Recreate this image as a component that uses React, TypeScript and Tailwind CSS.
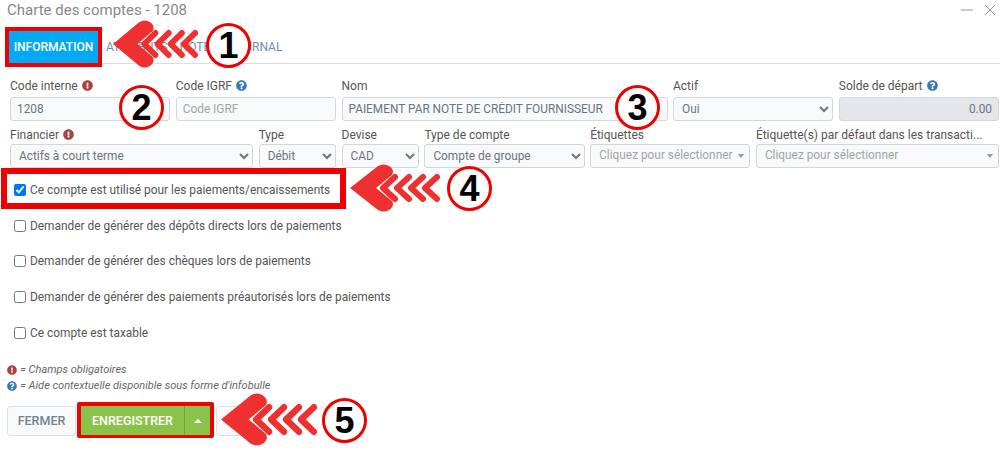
import { FaExclamationCircle, FaQuestionCircle } from "react-icons/fa";

function Required() {
  return <FaExclamationCircle className="inline-block ml-1 text-[#a94442] text-[11px] align-[-1px]" />;
}

function Help() {
  return <FaQuestionCircle className="inline-block ml-1 text-[#337ab7] text-[11px] align-[-1px]" />;
}

function Field({ label, span, tall, children }: { label: React.ReactNode; span: string; tall?: boolean; children: React.ReactNode }) {
  return (
    <div className={span}>
      <div className={(tall ? "h-[19px]" : "h-[17px]") + " text-[12px] leading-[17px] text-[#555] whitespace-nowrap overflow-hidden"}>{label}</div>
      {children}
    </div>
  );
}

const boxClass =
  "block w-full h-[24px] text-[11.85px] placeholder-[#a0a6ab] border border-[#d3d7da] rounded-[3px] outline-none";
const inputClass = boxClass + " px-[6px] text-[#6c757d] bg-[#f8f9fa]";

function Select({ value }: { value: string }) {
  return (
    <select defaultValue={value} className={boxClass + " px-[4px] text-[#6c757d] bg-[#f8f9fa]"}>
      <option>{value}</option>
    </select>
  );
}

function TagPicker() {
  return (
    <div className={boxClass + " flex items-center justify-between pl-[8px] pr-[5px] text-[#a0a6ab] bg-[#f8f9fa]"}>
      <span className="whitespace-nowrap">Cliquez pour sélectionner</span>
      <span className="border-x-[3px] border-x-transparent border-t-[4px] border-t-[#999]" />
    </div>
  );
}

function CheckRow({ label, checked, className }: { label: string; checked?: boolean; className: string }) {
  return (
    <label className={"flex items-center text-[11.9px] leading-[16px] text-[#555] ml-[14px] " + className}>
      <input type="checkbox" defaultChecked={checked} className="w-[12px] h-[12px] mr-[4px] accent-[#0075ff]" />
      {label}
    </label>
  );
}

// Red arrow used by the numbered callouts, tip on the left
function Arrow({ className }: { className: string }) {
  return (
    <svg viewBox="0 0 90 48" preserveAspectRatio="none" className={"absolute " + className}>
      <path
        d="M0 24 L28 2 Q34 -1 39 2 Q45 6 42 11 L26 24 L42 37 Q45 42 39 46 Q34 49 28 46 Z"
        fill="#ee3030"
      />
      <g fill="none" stroke="#ee3030" strokeWidth="6" strokeLinecap="round" strokeLinejoin="round">
        <path d="M45 13 L33 24 L45 35" />
        <path d="M59 13 L47 24 L59 35" />
        <path d="M73 13 L61 24 L73 35" />
        <path d="M87 13 L75 24 L87 35" />
      </g>
    </svg>
  );
}

function Badge({ n, className }: { n: number; className: string }) {
  return (
    <div
      className={
        "absolute w-[45px] h-[45px] rounded-full bg-white border-[3px] border-[#f00000] flex items-center justify-center text-black text-[36px] font-bold font-['Liberation_Sans',sans-serif] " +
        className
      }
    >
      {n}
    </div>
  );
}

export default function App() {
  return (
    <div className="relative w-[1000px] h-[451px] overflow-hidden bg-white font-['Roboto',sans-serif]">
      {/* Header */}
      <div className="flex items-center justify-between h-[20px] pl-[7px] pr-[4px]">
        <h1 className="text-[15px] leading-[20px] text-[#888]">Charte des comptes - 1208</h1>
        <div className="flex items-center gap-[11px]">
          <svg width="12" height="12" viewBox="0 0 12 12" stroke="#999" strokeWidth="1">
            <path d="M0 6h12" />
          </svg>
          <svg width="12" height="12" viewBox="0 0 12 12" stroke="#999" strokeWidth="1">
            <path d="M1 1l10 10M11 1L1 11" />
          </svg>
        </div>
      </div>

      {/* Tabs */}
      <div className="flex items-stretch h-[33px] mt-[11px] ml-[9px] border-b border-[#ddd] text-[12px] text-[#6f8fa6]">
        <div className="flex items-center justify-center w-[89px] bg-[#03a9f4] text-white font-medium">INFORMATION</div>
        <div className="flex items-center gap-[12px] pl-[8px]">
          <span>ATTRIBUTS</span>
          <span>NOTES</span>
          <span>JOURNAL</span>
        </div>
      </div>

      {/* Form */}
      <div className="grid grid-cols-12 gap-x-[5.5px] gap-y-[6px] mt-[14px] pl-[10px] pr-[1px]">
        <Field tall span="col-span-2" label={<>Code interne<Required /></>}>
          <input className={inputClass} defaultValue="1208" />
        </Field>
        <Field tall span="col-span-2" label={<>Code IGRF<Help /></>}>
          <input className={inputClass} placeholder="Code IGRF" />
        </Field>
        <Field tall span="col-span-4" label="Nom">
          <input className={inputClass} defaultValue="PAIEMENT PAR NOTE DE CRÉDIT FOURNISSEUR" />
        </Field>
        <Field tall span="col-span-2" label="Actif">
          <Select value="Oui" />
        </Field>
        <Field tall span="col-span-2" label={<>Solde de départ<Help /></>}>
          <input className={boxClass + " px-[6px] text-[#6c757d] bg-[#e4e6e9] border-[#c9ccd0] text-right"} defaultValue="0.00" disabled />
        </Field>

        <Field span="col-span-3" label={<>Financier<Required /></>}>
          <Select value="Actifs à court terme" />
        </Field>
        <Field span="col-span-1" label="Type">
          <Select value="Débit" />
        </Field>
        <Field span="col-span-1" label="Devise">
          <Select value="CAD" />
        </Field>
        <Field span="col-span-2" label="Type de compte">
          <Select value="Compte de groupe" />
        </Field>
        <Field span="col-span-2" label="Étiquettes">
          <TagPicker />
        </Field>
        <Field span="col-span-3" label="Étiquette(s) par défaut dans les transacti...">
          <TagPicker />
        </Field>
      </div>

      {/* Options */}
      <div className="flex flex-col">
        <CheckRow className="mt-[14px]" checked label="Ce compte est utilisé pour les paiements/encaissements" />
        <CheckRow className="mt-[20px]" label="Demander de générer des dépôts directs lors de paiements" />
        <CheckRow className="mt-[19px]" label="Demander de générer des chèques lors de paiements" />
        <CheckRow className="mt-[20px]" label="Demander de générer des paiements préautorisés lors de paiements" />
        <CheckRow className="mt-[20px]" label="Ce compte est taxable" />
      </div>

      {/* Legend */}
      <div className="mt-[21px] pl-[7px] text-[11px] leading-[16px] italic text-[#666]">
        <div className="flex items-center gap-[3px]">
          <FaExclamationCircle className="text-[#a94442] text-[10px]" /> = Champs obligatoires
        </div>
        <div className="flex items-center gap-[3px]">
          <FaQuestionCircle className="text-[#337ab7] text-[10px]" /> = Aide contextuelle disponible sous forme d'infobulle
        </div>
      </div>

      {/* Actions */}
      <div className="flex items-stretch h-[30px] mt-[12px] ml-[7px] text-[12.5px] font-medium">
        <button className="w-[69px] bg-[#f8f9fa] border border-[#dde1e4] rounded-[3px] text-[#6f8495]">FERMER</button>
        <button className="w-[103px] ml-[5px] bg-[#8bc34a] text-white">ENREGISTRER</button>
        <button className="flex items-center justify-center w-[26px] bg-[#8bc34a] border-l border-[#6fa334]">
          <span className="border-x-[4px] border-x-transparent border-b-[4px] border-b-white" />
        </button>
        <div className="w-[30px] ml-[6px] bg-[#f8f9fa] border border-[#dde1e4] rounded-[3px]" />
      </div>

      {/* Annotations */}
      <div className="absolute left-[5px] top-[27px] w-[97px] h-[40px] border-[4px] border-[#f00000]" />
      <div className="absolute left-[1px] top-[168px] w-[345px] h-[41px] border-[6px] border-[#f00000]" />
      <div className="absolute left-[77px] top-[402px] w-[137px] h-[36px] border-[4px] border-b-[3px] border-[#f00000] rounded-[2px]" />
      <Arrow className="left-[113px] top-[20px] w-[85px] h-[48px]" />
      <Arrow className="left-[350px] top-[164px] w-[90px] h-[48px]" />
      <Arrow className="left-[221px] top-[393px] w-[96px] h-[53px]" />
      <Badge n={1} className="left-[206px] top-[23px]" />
      <Badge n={2} className="left-[119px] top-[85px]" />
      <Badge n={3} className="left-[615px] top-[85px]" />
      <Badge n={4} className="left-[447px] top-[166px]" />
      <Badge n={5} className="left-[322px] top-[398px]" />
    </div>
  );
}
